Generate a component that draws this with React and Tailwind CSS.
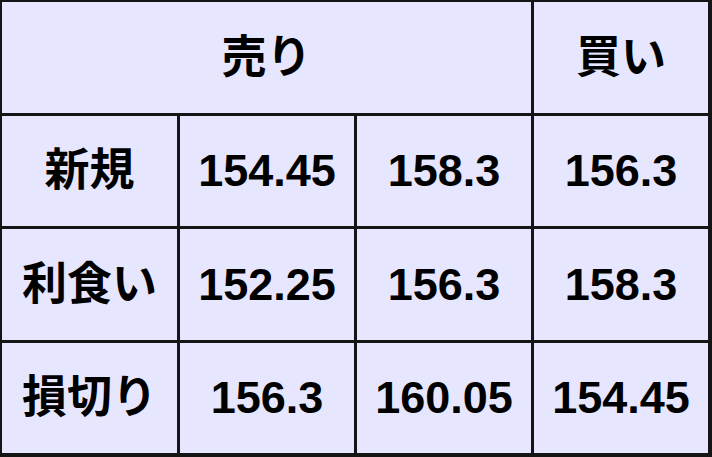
import React from "react";

const rows = [
  ["新規", "154.45", "158.3", "156.3"],
  ["利食い", "152.25", "156.3", "158.3"],
  ["損切り", "156.3", "160.05", "154.45"],
];

const cell =
  "bg-[#e6e6ff] flex items-center justify-center text-black font-bold text-[45px] leading-none";

export default function App() {
  return (
    <div
      className="w-[712px] h-[457px] bg-[#151515] pt-[2px] pl-[2px] pr-[4px] pb-[4px] grid grid-cols-[175px_174px_174px_174px] grid-rows-4 gap-[3px]"
      style={{ fontFamily: '"Liberation Sans", "Noto Sans CJK JP", sans-serif' }}
    >
      <div className={`${cell} col-span-3`}>売り</div>
      <div className={cell}>買い</div>
      {rows.map((r) =>
        r.map((v, i) => (
          <div key={r[0] + i} className={cell}>
            {v}
          </div>
        ))
      )}
    </div>
  );
}
